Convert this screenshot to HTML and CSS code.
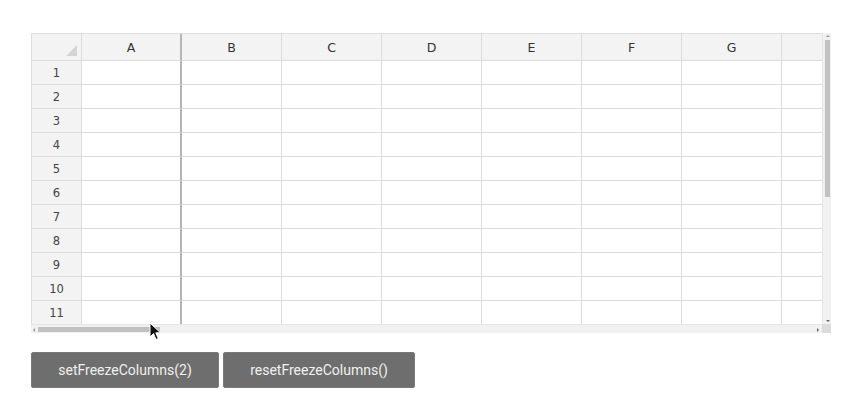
FILE: index.html
```html
<!DOCTYPE html>
<html>
<head>
<meta charset="utf-8">
<link rel="stylesheet" href="styles.css">
</head>
<body>
<div class="page">
  <div class="sheet">
    <div class="viewport">
      <div class="grid head">
        <div class="cell hdr corner"><span class="tri"></span></div>
        <div class="cell hdr frozen">A</div>
        <div class="cell hdr">B</div>
        <div class="cell hdr">C</div>
        <div class="cell hdr">D</div>
        <div class="cell hdr">E</div>
        <div class="cell hdr">F</div>
        <div class="cell hdr">G</div>
        <div class="cell hdr"></div>
      </div>
      <div class="grid body" id="body"></div>
    </div>
    <div class="vscroll"><span class="arr up"></span><span class="vthumb"></span><span class="arr down"></span></div>
    <div class="hscroll"><span class="arr left"></span><span class="hthumb"></span><span class="arr right"></span></div>
    <div class="sq"></div>
  </div>
  <div class="buttons">
    <button class="btn b1">setFreezeColumns(2)</button>
    <button class="btn b2">resetFreezeColumns()</button>
  </div>
  <svg class="cursor" width="14" height="20" viewBox="0 0 14 20"><path d="M1 1 L1 15 L4.5 11.5 L7 17.5 L9.3 16.5 L6.8 10.8 L11.5 10.8 Z" fill="#111" stroke="#fff" stroke-width="1"/></svg>
</div>
<script>
  var b = document.getElementById('body');
  var html = '';
  for (var r = 1; r <= 11; r++) {
    html += '<div class="cell rh">' + r + '</div>';
    for (var c = 0; c < 8; c++) {
      html += '<div class="cell' + (c === 0 ? ' frozen' : '') + '"></div>';
    }
  }
  b.innerHTML = html;
</script>
</body>
</html>
```

FILE: styles.css
```css
html, body { margin: 0; padding: 0; background: #fff; }
.page {
  position: relative;
  padding: 33px 0 0 31px;
  font-family: "DejaVu Sans", "Noto Sans", sans-serif;
}
.sheet {
  position: relative;
  width: 800px;
  height: 300px;
  display: grid;
  grid-template-columns: 791px 9px;
  grid-template-rows: 291px 9px;
  box-sizing: border-box;
}
.viewport {
  overflow: hidden;
  border-top: 1px solid #ddd;
  border-left: 1px solid #ddd;
  box-sizing: border-box;
}
.grid {
  display: grid;
  grid-template-columns: 50px repeat(8, 100px);
  grid-auto-rows: 24px;
  width: 850px;
}
.grid.head { grid-auto-rows: 27px; }
.cell {
  box-sizing: border-box;
  border-right: 1px solid #dcdcdc;
  border-bottom: 1px solid #dcdcdc;
  display: flex;
  align-items: center;
  justify-content: center;
  font-size: 12px;
  color: #444;
}
.hdr { background: #f3f3f3; font-size: 12.5px; color: #333; }
.rh { background: #f3f3f3; font-size: 11.5px; color: #444; }
.frozen { border-right: 2px solid #b5b5b5; }
.corner { position: relative; }
.tri {
  position: absolute;
  right: 4px;
  bottom: 4px;
  width: 0; height: 0;
  border-left: 11px solid transparent;
  border-bottom: 11px solid #d4d4d4;
}
.vscroll {
  position: relative;
  background: #f1f1f1;
  border-left: 1px solid #e6e6e6;
  box-sizing: border-box;
}
.vthumb {
  position: absolute;
  left: 2px;
  top: 7px;
  width: 5px;
  height: 157px;
  background: #c1c1c1;
}
.hscroll {
  position: relative;
  background: #f1f1f1;
  border-top: 1px solid #e6e6e6;
  box-sizing: border-box;
}
.hthumb {
  position: absolute;
  top: 2px;
  left: 7px;
  height: 5px;
  width: 122px;
  background: #c1c1c1;
}
.sq { background: #dcdcdc; }
.arr { position: absolute; width: 0; height: 0; }
.arr.up { top: 2px; left: 3px; border-left: 2px solid transparent; border-right: 2px solid transparent; border-bottom: 2px solid #999; }
.arr.down { bottom: 2px; left: 3px; border-left: 2px solid transparent; border-right: 2px solid transparent; border-top: 2px solid #666; }
.arr.left { left: 2px; top: 3px; border-top: 2px solid transparent; border-bottom: 2px solid transparent; border-right: 2px solid #999; }
.arr.right { right: 3px; top: 3px; border-top: 2px solid transparent; border-bottom: 2px solid transparent; border-left: 2px solid #666; }
.buttons {
  display: flex;
  gap: 4px;
  margin-top: 19px;
}
.btn {
  height: 36px;
  background: #6e6e6e;
  color: #f0f0f0;
  border: 1px solid #7a7a7a;
  border-radius: 2px;
  font-family: Roboto, "Liberation Sans", sans-serif;
  font-size: 14px;
  padding: 0;
}
.b1 { width: 188px; }
.b2 { width: 192px; }
.cursor {
  position: absolute;
  left: 149px;
  top: 322px;
}
```
